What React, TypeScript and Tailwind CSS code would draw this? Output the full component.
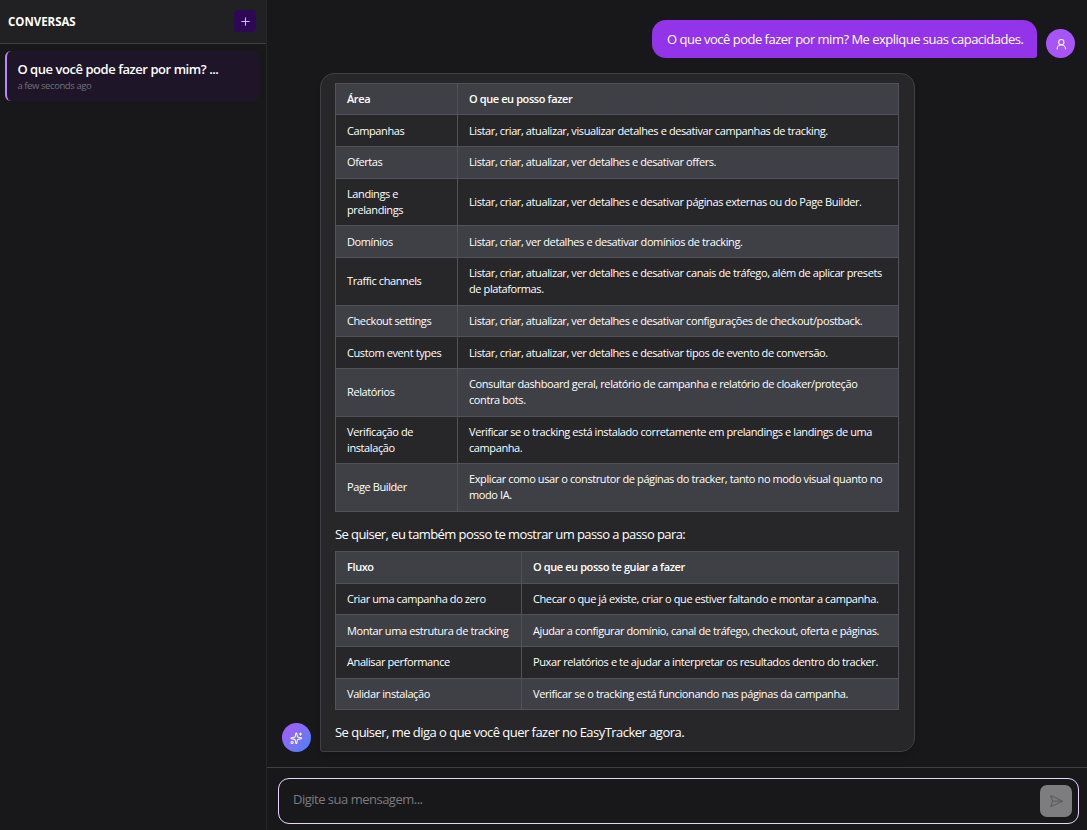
import { Plus, SendHorizontal, Sparkles, UserRound } from "lucide-react";
import clsx from "clsx";

interface CapabilityTableProps {
  head: [string, string];
  rows: [string, string][];
  firstCol: string;
}

const areas: [string, string][] = [
  ["Campanhas", "Listar, criar, atualizar, visualizar detalhes e desativar campanhas de tracking."],
  ["Ofertas", "Listar, criar, atualizar, ver detalhes e desativar offers."],
  ["Landings e prelandings", "Listar, criar, atualizar, ver detalhes e desativar páginas externas ou do Page Builder."],
  ["Domínios", "Listar, criar, ver detalhes e desativar domínios de tracking."],
  ["Traffic channels", "Listar, criar, atualizar, ver detalhes e desativar canais de tráfego, além de aplicar presets de plataformas."],
  ["Checkout settings", "Listar, criar, atualizar, ver detalhes e desativar configurações de checkout/postback."],
  ["Custom event types", "Listar, criar, atualizar, ver detalhes e desativar tipos de evento de conversão."],
  ["Relatórios", "Consultar dashboard geral, relatório de campanha e relatório de cloaker/proteção contra bots."],
  ["Verificação de instalação", "Verificar se o tracking está instalado corretamente em prelandings e landings de uma campanha."],
  ["Page Builder", "Explicar como usar o construtor de páginas do tracker, tanto no modo visual quanto no modo IA."],
];

const flows: [string, string][] = [
  ["Criar uma campanha do zero", "Checar o que já existe, criar o que estiver faltando e montar a campanha."],
  ["Montar uma estrutura de tracking", "Ajudar a configurar domínio, canal de tráfego, checkout, oferta e páginas."],
  ["Analisar performance", "Puxar relatórios e te ajudar a interpretar os resultados dentro do tracker."],
  ["Validar instalação", "Verificar se o tracking está funcionando nas páginas da campanha."],
];

const cell = "border border-[#52525b] pr-[9px] pl-[11px] py-[7.33px] text-left align-middle";

const CapabilityTable = ({ head, rows, firstCol }: CapabilityTableProps) => (
  <table className="w-[564px] table-fixed border-collapse text-[11px] leading-4 tracking-[-0.4px]">
    <colgroup>
      <col className={firstCol} />
      <col />
    </colgroup>
    <thead>
      <tr className="bg-[#3f3f46]">
        {head.map((title) => (
          <th key={title} className={clsx(cell, "font-semibold")}>
            {title}
          </th>
        ))}
      </tr>
    </thead>
    <tbody>
      {rows.map(([name, description]) => (
        <tr key={name} className="even:bg-[#3f3f46]">
          <td className={cell}>{name}</td>
          <td className={cell}>{description}</td>
        </tr>
      ))}
    </tbody>
  </table>
);

const Sidebar = () => (
  <aside className="flex w-[267px] shrink-0 flex-col border-r border-[#27272a]">
    <div className="flex h-11 items-center justify-between border-b border-[#3f3f46] bg-[#212123] pr-[10px] pb-px pl-2">
      <h2 className="pt-px text-[11.5px] font-bold tracking-[-0.03px]">CONVERSAS</h2>
      <button className="flex size-[22px] items-center justify-center rounded-[4px] bg-[#2e0854] text-[#d8b4fe]">
        <Plus size={13} strokeWidth={2} />
      </button>
    </div>
    <div className="mt-[7px] mr-[7px] ml-[5px] h-[50px] rounded-[6px] border-l-2 border-[#c084fc] bg-[#1e1528] pt-[9px] pl-[10.4px]">
      <p className="text-[13px] leading-[18px] font-semibold tracking-[-0.45px]">
        O que você pode fazer por mim? ...
      </p>
      <p className="pt-px text-[9.5px] leading-[14px] tracking-[-0.42px] text-[#71717a]">a few seconds ago</p>
    </div>
  </aside>
);

const App = () => {
  return (
    <div className="flex h-[830px] w-[1087px] overflow-hidden bg-[#18181a] font-['Open_Sans','Noto_Sans',sans-serif] text-white">
      <Sidebar />
      <main className="flex min-w-0 flex-1 flex-col">
        <div className="flex flex-1 flex-col gap-[15px] pt-5 pr-3 pl-[15px]">
          <div className="flex items-end justify-end gap-[9px]">
            <div className="flex h-[38px] w-[385px] items-center rounded-[14px] rounded-br-[3px] bg-[#9333ea] pt-[2px] pl-[15px] text-[13px] tracking-[-0.51px] whitespace-nowrap">
              O que você pode fazer por mim? Me explique suas capacidades.
            </div>
            <div className="flex size-[29px] items-center justify-center rounded-full bg-[#a855f7] pt-px pl-px">
              <UserRound size={12.6} />
            </div>
          </div>

          <div className="flex items-end gap-[9px]">
            <div className="flex size-[29px] items-center justify-center rounded-full bg-linear-to-br from-[#a855f7] to-[#3b82f6] pt-px">
              <Sparkles size={12.6} />
            </div>
            <div className="h-[679px] w-[595px] rounded-[14px] rounded-bl-[3px] border border-[#3f3f46] bg-[#27272a] px-[14px] pt-[8.6px] shadow-md">
              <CapabilityTable head={["Área", "O que eu posso fazer"]} rows={areas} firstCol="w-[122px]" />
              <p className="mt-[13.2px] mb-[7px] text-[13px] leading-[19px] tracking-[-0.58px]">
                Se quiser, eu também posso te mostrar um passo a passo para:
              </p>
              <CapabilityTable head={["Fluxo", "O que eu posso te guiar a fazer"]} rows={flows} firstCol="w-[186px]" />
              <p className="mt-[12.6px] text-[13px] leading-[19px] tracking-[-0.53px]">
                Se quiser, me diga o que você quer fazer no EasyTracker agora.
              </p>
            </div>
          </div>
        </div>

        <div className="border-t border-[#3f3f46] pt-[10px] pr-2 pb-[6px] pl-[11px]">
          <div className="flex h-[46px] items-center rounded-[11px] border border-[#e9d5ff] pr-[6px] pl-[14px]">
            <input
              className="min-w-0 flex-1 bg-transparent pb-[3px] text-[13px] tracking-[-0.5px] outline-none placeholder:text-[#7b7b80]"
              placeholder="Digite sua mensagem..."
            />
            <button className="flex size-8 items-center justify-center rounded-[7px] bg-[#7d7d7f] text-[#5f5f63]">
              <SendHorizontal size={14.4} />
            </button>
          </div>
        </div>
      </main>
    </div>
  );
};

export default App;
